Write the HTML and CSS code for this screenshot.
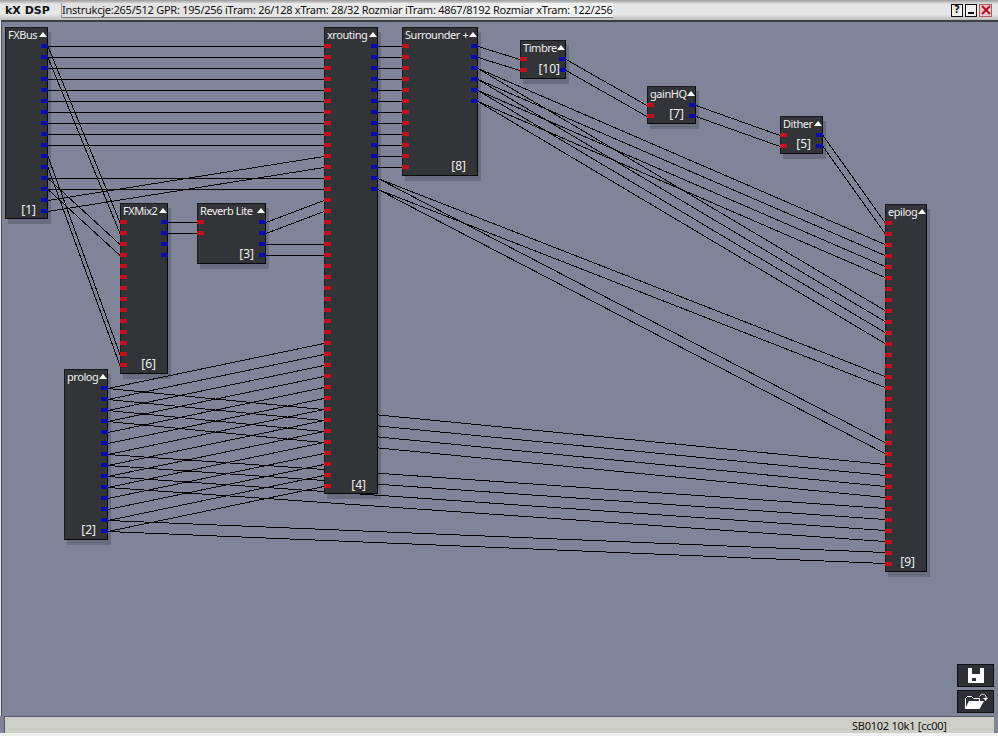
FILE: index.html
```html
<!DOCTYPE html>
<html lang="pl">
<head>
<meta charset="utf-8">
<title>kX DSP</title>
<link rel="stylesheet" href="styles.css">
</head>
<body>
<div class="window">
  <header class="titlebar">
    <strong class="app-name">kX DSP</strong>
    <div class="stats">Instrukcje:265/512 GPR: 195/256 iTram: 26/128 xTram: 28/32 Rozmiar iTram: 4867/8192 Rozmiar xTram: 122/256</div>
    <div class="win-buttons">
      <button class="win-btn">?</button>
      <button class="win-btn"><span class="min-bar"></span></button>
      <button class="win-btn close">
        <svg width="10" height="10" viewBox="0 0 10 10"><path class="close-x" d="M1 1L9 9M9 1L1 9"/></svg>
      </button>
    </div>
  </header>

  <main class="canvas">
    <svg class="wires" width="996" height="695" viewBox="2 22 996 695">
      <path class="wire" d="M48 46.5H324M48 57.5H324M48 68.5H324M48 79.5H324M48 90.5H324M48 101.5H324M48 112.5H324M48 123.5H324M48 134.5H324M48 145.5H324M48 178.5H324M48 189.5H324
        M48 200.5L324 156.5M48 211.5L324 167.5
        M48 46.5L120 222.5M48 57.5L120 233.5M48 178.5L120 244.5M48 189.5L120 255.5M48 156.5L120 354.5M48 167.5L120 365.5
        M168 222.5H197M168 233.5H197
        M266 222.5L324 200.5M266 233.5L324 211.5M266 244.5H324M266 255.5H324
        M108 388.5L324 343.5M108 399.5L324 354.5M108 410.5L324 365.5M108 421.5L324 376.5M108 432.5L324 387.5M108 443.5L324 398.5M108 454.5L324 409.5M108 465.5L324 420.5M108 476.5L324 431.5M108 487.5L324 442.5M108 498.5L324 453.5M108 509.5L324 464.5M108 520.5L324 475.5M108 531.5L324 486.5
        M108 388.5L885 464.5M108 399.5L885 475.5M108 410.5L885 486.5M108 421.5L885 497.5M108 454.5L885 508.5M108 465.5L885 519.5M108 476.5L885 530.5M108 487.5L885 541.5M108 520.5L885 552.5M108 531.5L885 563.5
        M378 46.5H402M378 57.5H402M378 68.5H402M378 79.5H402M378 90.5H402M378 101.5H402M378 112.5H402M378 123.5H402M378 134.5H402M378 145.5H402M378 156.5H402M378 167.5H402
        M378 178.5L885 376.5M378 189.5L885 387.5M378 178.5L885 442.5M378 189.5L885 453.5
        M478 46.5L520 59.5M478 57.5L520 70.5
        M478 68.5L885 244.5M478 79.5L885 255.5M478 90.5L885 266.5M478 101.5L885 277.5
        M478 68.5L885 310.5M478 79.5L885 321.5M478 90.5L885 332.5M478 101.5L885 343.5
        M566 59.5L647 105.5M566 70.5L647 116.5
        M696 105.5L780 135.5M696 116.5L780 146.5
        M823 135.5L885 222.5M823 146.5L885 233.5"/>
    </svg>

    <section class="node fxbus">
      <h3 class="node-head">FXBus<i class="tri"></i></h3>
      <div class="node-body">
        <div class="pins"></div>
        <div class="pins"><i class="pin out"></i><i class="pin out"></i><i class="pin out"></i><i class="pin out"></i><i class="pin out"></i><i class="pin out"></i><i class="pin out"></i><i class="pin out"></i><i class="pin out"></i><i class="pin out"></i><i class="pin out"></i><i class="pin out"></i><i class="pin out"></i><i class="pin out"></i><i class="pin out"></i><i class="pin out"></i></div>
      </div>
      <span class="node-id">[1]</span>
    </section>

    <section class="node fxmix">
      <h3 class="node-head">FXMix2<i class="tri"></i></h3>
      <div class="node-body">
        <div class="pins"><i class="pin in"></i><i class="pin in"></i><i class="pin in"></i><i class="pin in"></i><i class="pin in"></i><i class="pin in"></i><i class="pin in"></i><i class="pin in"></i><i class="pin in"></i><i class="pin in"></i><i class="pin in"></i><i class="pin in"></i><i class="pin in"></i><i class="pin in"></i></div>
        <div class="pins"><i class="pin out"></i><i class="pin out"></i><i class="pin out"></i><i class="pin out"></i></div>
      </div>
      <span class="node-id">[6]</span>
    </section>

    <section class="node reverb">
      <h3 class="node-head">Reverb Lite<i class="tri"></i></h3>
      <div class="node-body">
        <div class="pins"><i class="pin in"></i><i class="pin in"></i></div>
        <div class="pins"><i class="pin out"></i><i class="pin out"></i><i class="pin out"></i><i class="pin out"></i></div>
      </div>
      <span class="node-id">[3]</span>
    </section>

    <section class="node prolog">
      <h3 class="node-head">prolog<i class="tri"></i></h3>
      <div class="node-body">
        <div class="pins"></div>
        <div class="pins"><i class="pin out"></i><i class="pin out"></i><i class="pin out"></i><i class="pin out"></i><i class="pin out"></i><i class="pin out"></i><i class="pin out"></i><i class="pin out"></i><i class="pin out"></i><i class="pin out"></i><i class="pin out"></i><i class="pin out"></i><i class="pin out"></i><i class="pin out"></i></div>
      </div>
      <span class="node-id">[2]</span>
    </section>

    <section class="node xrouting">
      <h3 class="node-head">xrouting<i class="tri"></i></h3>
      <div class="node-body">
        <div class="pins"><i class="pin in"></i><i class="pin in"></i><i class="pin in"></i><i class="pin in"></i><i class="pin in"></i><i class="pin in"></i><i class="pin in"></i><i class="pin in"></i><i class="pin in"></i><i class="pin in"></i><i class="pin in"></i><i class="pin in"></i><i class="pin in"></i><i class="pin in"></i><i class="pin in"></i><i class="pin in"></i><i class="pin in"></i><i class="pin in"></i><i class="pin in"></i><i class="pin in"></i><i class="pin in"></i><i class="pin in"></i><i class="pin in"></i><i class="pin in"></i><i class="pin in"></i><i class="pin in"></i><i class="pin in"></i><i class="pin in"></i><i class="pin in"></i><i class="pin in"></i><i class="pin in"></i><i class="pin in"></i><i class="pin in"></i><i class="pin in"></i><i class="pin in"></i><i class="pin in"></i><i class="pin in"></i><i class="pin in"></i><i class="pin in"></i><i class="pin in"></i><i class="pin in"></i></div>
        <div class="pins"><i class="pin out"></i><i class="pin out"></i><i class="pin out"></i><i class="pin out"></i><i class="pin out"></i><i class="pin out"></i><i class="pin out"></i><i class="pin out"></i><i class="pin out"></i><i class="pin out"></i><i class="pin out"></i><i class="pin out"></i><i class="pin out"></i><i class="pin out"></i></div>
      </div>
      <span class="node-id">[4]</span>
    </section>

    <section class="node surrounder">
      <h3 class="node-head">Surrounder +<i class="tri"></i></h3>
      <div class="node-body">
        <div class="pins"><i class="pin in"></i><i class="pin in"></i><i class="pin in"></i><i class="pin in"></i><i class="pin in"></i><i class="pin in"></i><i class="pin in"></i><i class="pin in"></i><i class="pin in"></i><i class="pin in"></i><i class="pin in"></i><i class="pin in"></i></div>
        <div class="pins"><i class="pin out"></i><i class="pin out"></i><i class="pin out"></i><i class="pin out"></i><i class="pin out"></i><i class="pin out"></i></div>
      </div>
      <span class="node-id">[8]</span>
    </section>

    <section class="node timbre">
      <h3 class="node-head">Timbre<i class="tri"></i></h3>
      <div class="node-body">
        <div class="pins"><i class="pin in"></i><i class="pin in"></i></div>
        <div class="pins"><i class="pin out"></i><i class="pin out"></i></div>
      </div>
      <span class="node-id">[10]</span>
    </section>

    <section class="node gainhq">
      <h3 class="node-head">gainHQ<i class="tri"></i></h3>
      <div class="node-body">
        <div class="pins"><i class="pin in"></i><i class="pin in"></i></div>
        <div class="pins"><i class="pin out"></i><i class="pin out"></i></div>
      </div>
      <span class="node-id">[7]</span>
    </section>

    <section class="node dither">
      <h3 class="node-head">Dither<i class="tri"></i></h3>
      <div class="node-body">
        <div class="pins"><i class="pin in"></i><i class="pin in"></i></div>
        <div class="pins"><i class="pin out"></i><i class="pin out"></i></div>
      </div>
      <span class="node-id">[5]</span>
    </section>

    <section class="node epilog">
      <h3 class="node-head">epilog<i class="tri"></i></h3>
      <div class="node-body">
        <div class="pins"><i class="pin in"></i><i class="pin in"></i><i class="pin in"></i><i class="pin in"></i><i class="pin in"></i><i class="pin in"></i><i class="pin in"></i><i class="pin in"></i><i class="pin in"></i><i class="pin in"></i><i class="pin in"></i><i class="pin in"></i><i class="pin in"></i><i class="pin in"></i><i class="pin in"></i><i class="pin in"></i><i class="pin in"></i><i class="pin in"></i><i class="pin in"></i><i class="pin in"></i><i class="pin in"></i><i class="pin in"></i><i class="pin in"></i><i class="pin in"></i><i class="pin in"></i><i class="pin in"></i><i class="pin in"></i><i class="pin in"></i><i class="pin in"></i><i class="pin in"></i><i class="pin in"></i><i class="pin in"></i></div>
        <div class="pins"></div>
      </div>
      <span class="node-id">[9]</span>
    </section>

    <div class="tools">
      <button class="tool-btn" aria-label="Zapisz">
        <svg width="16" height="15" viewBox="0 0 16 15"><path class="icon-fill" fill-rule="evenodd" d="M0 0H16V15H0ZM4 0V6H12V0ZM3 9V14H13V9Z"/><rect class="icon-fill" x="3" y="9" width="10" height="5"/><rect class="icon-dark" x="4" y="10" width="4" height="3"/></svg>
      </button>
      <button class="tool-btn" aria-label="Otwórz">
        <svg width="24" height="17" viewBox="0 0 24 17"><path class="icon-line" d="M1.5 15.5V5.5L3.5 3.5H7.5L9.5 5.5H15.5V8"/><path class="icon-fill" d="M1 16L5 8H20L15.5 16Z"/><path class="icon-line" d="M15.5 3.5C17 1 20 0.5 22 3V6"/><path class="icon-fill" d="M19 5H24L21.5 8Z"/></svg>
      </button>
    </div>
  </main>

  <footer class="statusbar"><div class="status-panel">SB0102 10k1 [cc00]</div></footer>
</div>
</body>
</html>
```

FILE: styles.css
```css
* { box-sizing: border-box; }

html, body { margin: 0; height: 100%; }

body {
  font-family: "Noto Sans", "Liberation Sans", sans-serif;
  font-size: 11px;
  letter-spacing: -0.25px;
  background: #d4d0c8;
}

.window {
  width: 998px;
  height: 736px;
  display: flex;
  flex-direction: column;
  overflow: hidden;
  background: #e6e6e2;
}

/* title bar */
.titlebar {
  height: 20px;
  flex: none;
  display: flex;
  align-items: center;
  padding: 0 6px 0 5px;
  background: linear-gradient(#9c9c9c 0, #e4e4e4 4px, #e8e8e8 14px, #bdbdbd 20px);
}

.app-name {
  width: 56px;
  flex: none;
  font-family: "DejaVu Sans", sans-serif;
  font-size: 11px;
  letter-spacing: 0;
  color: #111;
}

.stats {
  width: 552px;
  height: 15px;
  line-height: 14px;
  flex: none;
  color: #111;
  white-space: nowrap;
  background: linear-gradient(90deg, #e0e0e0, #f4f4f4);
  border-bottom: 1px solid #777;
  border-left: 1px solid #999;
}

.win-buttons {
  margin-left: auto;
  display: flex;
  gap: 2px;
}

.win-btn {
  width: 12px;
  height: 13px;
  padding: 0;
  display: flex;
  align-items: center;
  justify-content: center;
  background: #f0f0f0;
  border: 1px solid #111;
  font: bold 10px/1 "DejaVu Sans", sans-serif;
  color: #111;
}

.win-btn.close {
  width: 13px;
  background: #e8c8c8;
  border-color: #a86060;
}

.close-x {
  fill: none;
  stroke: #b01020;
  stroke-width: 2;
}

.min-bar {
  display: block;
  width: 6px;
  height: 2px;
  margin-top: 6px;
  background: #111;
}

/* canvas */
.canvas {
  flex: 1;
  position: relative;
  overflow: hidden;
  isolation: isolate;
  margin-left: 1px;
  background: #7f8499;
  border-top: 2px solid #3c3e48;
  border-left: 1px solid #4a4c58;
}

.wires {
  position: absolute;
  left: 0;
  top: 0;
  z-index: 1;
}

.wire {
  fill: none;
  stroke: #000;
  stroke-width: 1;
  shape-rendering: crispEdges;
}

/* nodes: shadow below the wires, face above them */
.node {
  position: absolute;
  display: flex;
  flex-direction: column;
}

.node::before,
.node::after {
  content: "";
  position: absolute;
  inset: 0;
}

.node::before {
  z-index: 0;
  transform: translate(3px, 5px);
  background: #696d80;
}

.node::after {
  z-index: 2;
  background: #333438;
  border: 1px solid #1a1a1e;
  border-right-color: #08080c;
  border-bottom-color: #08080c;
}

.node-head,
.node-body,
.node-id {
  z-index: 3;
}

.node-head {
  position: relative;
  margin: 0;
  height: 17px;
  flex: none;
  display: flex;
  align-items: center;
  justify-content: space-between;
  padding: 0 0 2px 3px;
  font-weight: 400;
  font-size: 11px;
  letter-spacing: -0.45px;
  color: #f0f0f0;
  white-space: nowrap;
}

.tri {
  flex: none;
  width: 0;
  height: 0;
  margin-right: 1px;
  border-left: 4px solid transparent;
  border-right: 4px solid transparent;
  border-bottom: 5px solid #fff;
}

.node-body {
  position: relative;
  display: flex;
  justify-content: space-between;
}

.pins {
  display: flex;
  flex-direction: column;
  gap: 7px;
}

.pin {
  display: block;
  width: 7px;
  height: 4px;
}

.pin.in { background: #c4101e; }
.pin.out { background: #0a0aa6; }

.node-id {
  position: absolute;
  right: 12px;
  bottom: 3px;
  font-size: 12px;
  letter-spacing: 0;
  line-height: 14px;
  color: #f0f0f0;
}

.fxbus .node-id,
.xrouting .node-id { bottom: 2px; }
.timbre .node-id { right: 6px; }

.fxbus { left: 3px; top: 5px; width: 43px; height: 192px; }
.fxmix { left: 118px; top: 181px; width: 48px; height: 171px; }
.reverb { left: 195px; top: 181px; width: 69px; height: 61px; }
.prolog { left: 62px; top: 347px; width: 44px; height: 171px; }
.xrouting { left: 322px; top: 5px; width: 54px; height: 467px; }
.surrounder { left: 400px; top: 5px; width: 76px; height: 149px; }
.timbre { left: 518px; top: 18px; width: 46px; height: 39px; }
.gainhq { left: 645px; top: 64px; width: 49px; height: 38px; }
.dither { left: 778px; top: 94px; width: 43px; height: 38px; }
.epilog { left: 883px; top: 182px; width: 42px; height: 368px; }

/* tools */
.tools {
  position: absolute;
  right: 4px;
  bottom: 3px;
  z-index: 4;
  display: flex;
  flex-direction: column;
  gap: 3px;
}

.tool-btn {
  width: 37px;
  height: 23px;
  padding: 0;
  display: flex;
  align-items: center;
  justify-content: center;
  background: #2f3035;
  border: 1px solid #101014;
}

.icon-fill { fill: #fff; }
.icon-dark { fill: #2f3035; }

.icon-line {
  fill: none;
  stroke: #fff;
  stroke-width: 1;
}

/* status bar */
.statusbar {
  height: 20px;
  flex: none;
  padding: 0 4px;
  background: #7f8499;
  border-bottom: 3px solid #f0f0ee;
}

.status-panel {
  height: 17px;
  padding-left: 847px;
  display: flex;
  align-items: center;
  background: #cdcec6;
  border-top: 1px solid #55576a;
  border-left: 1px solid #55576a;
  color: #111;
  white-space: nowrap;
}
```
